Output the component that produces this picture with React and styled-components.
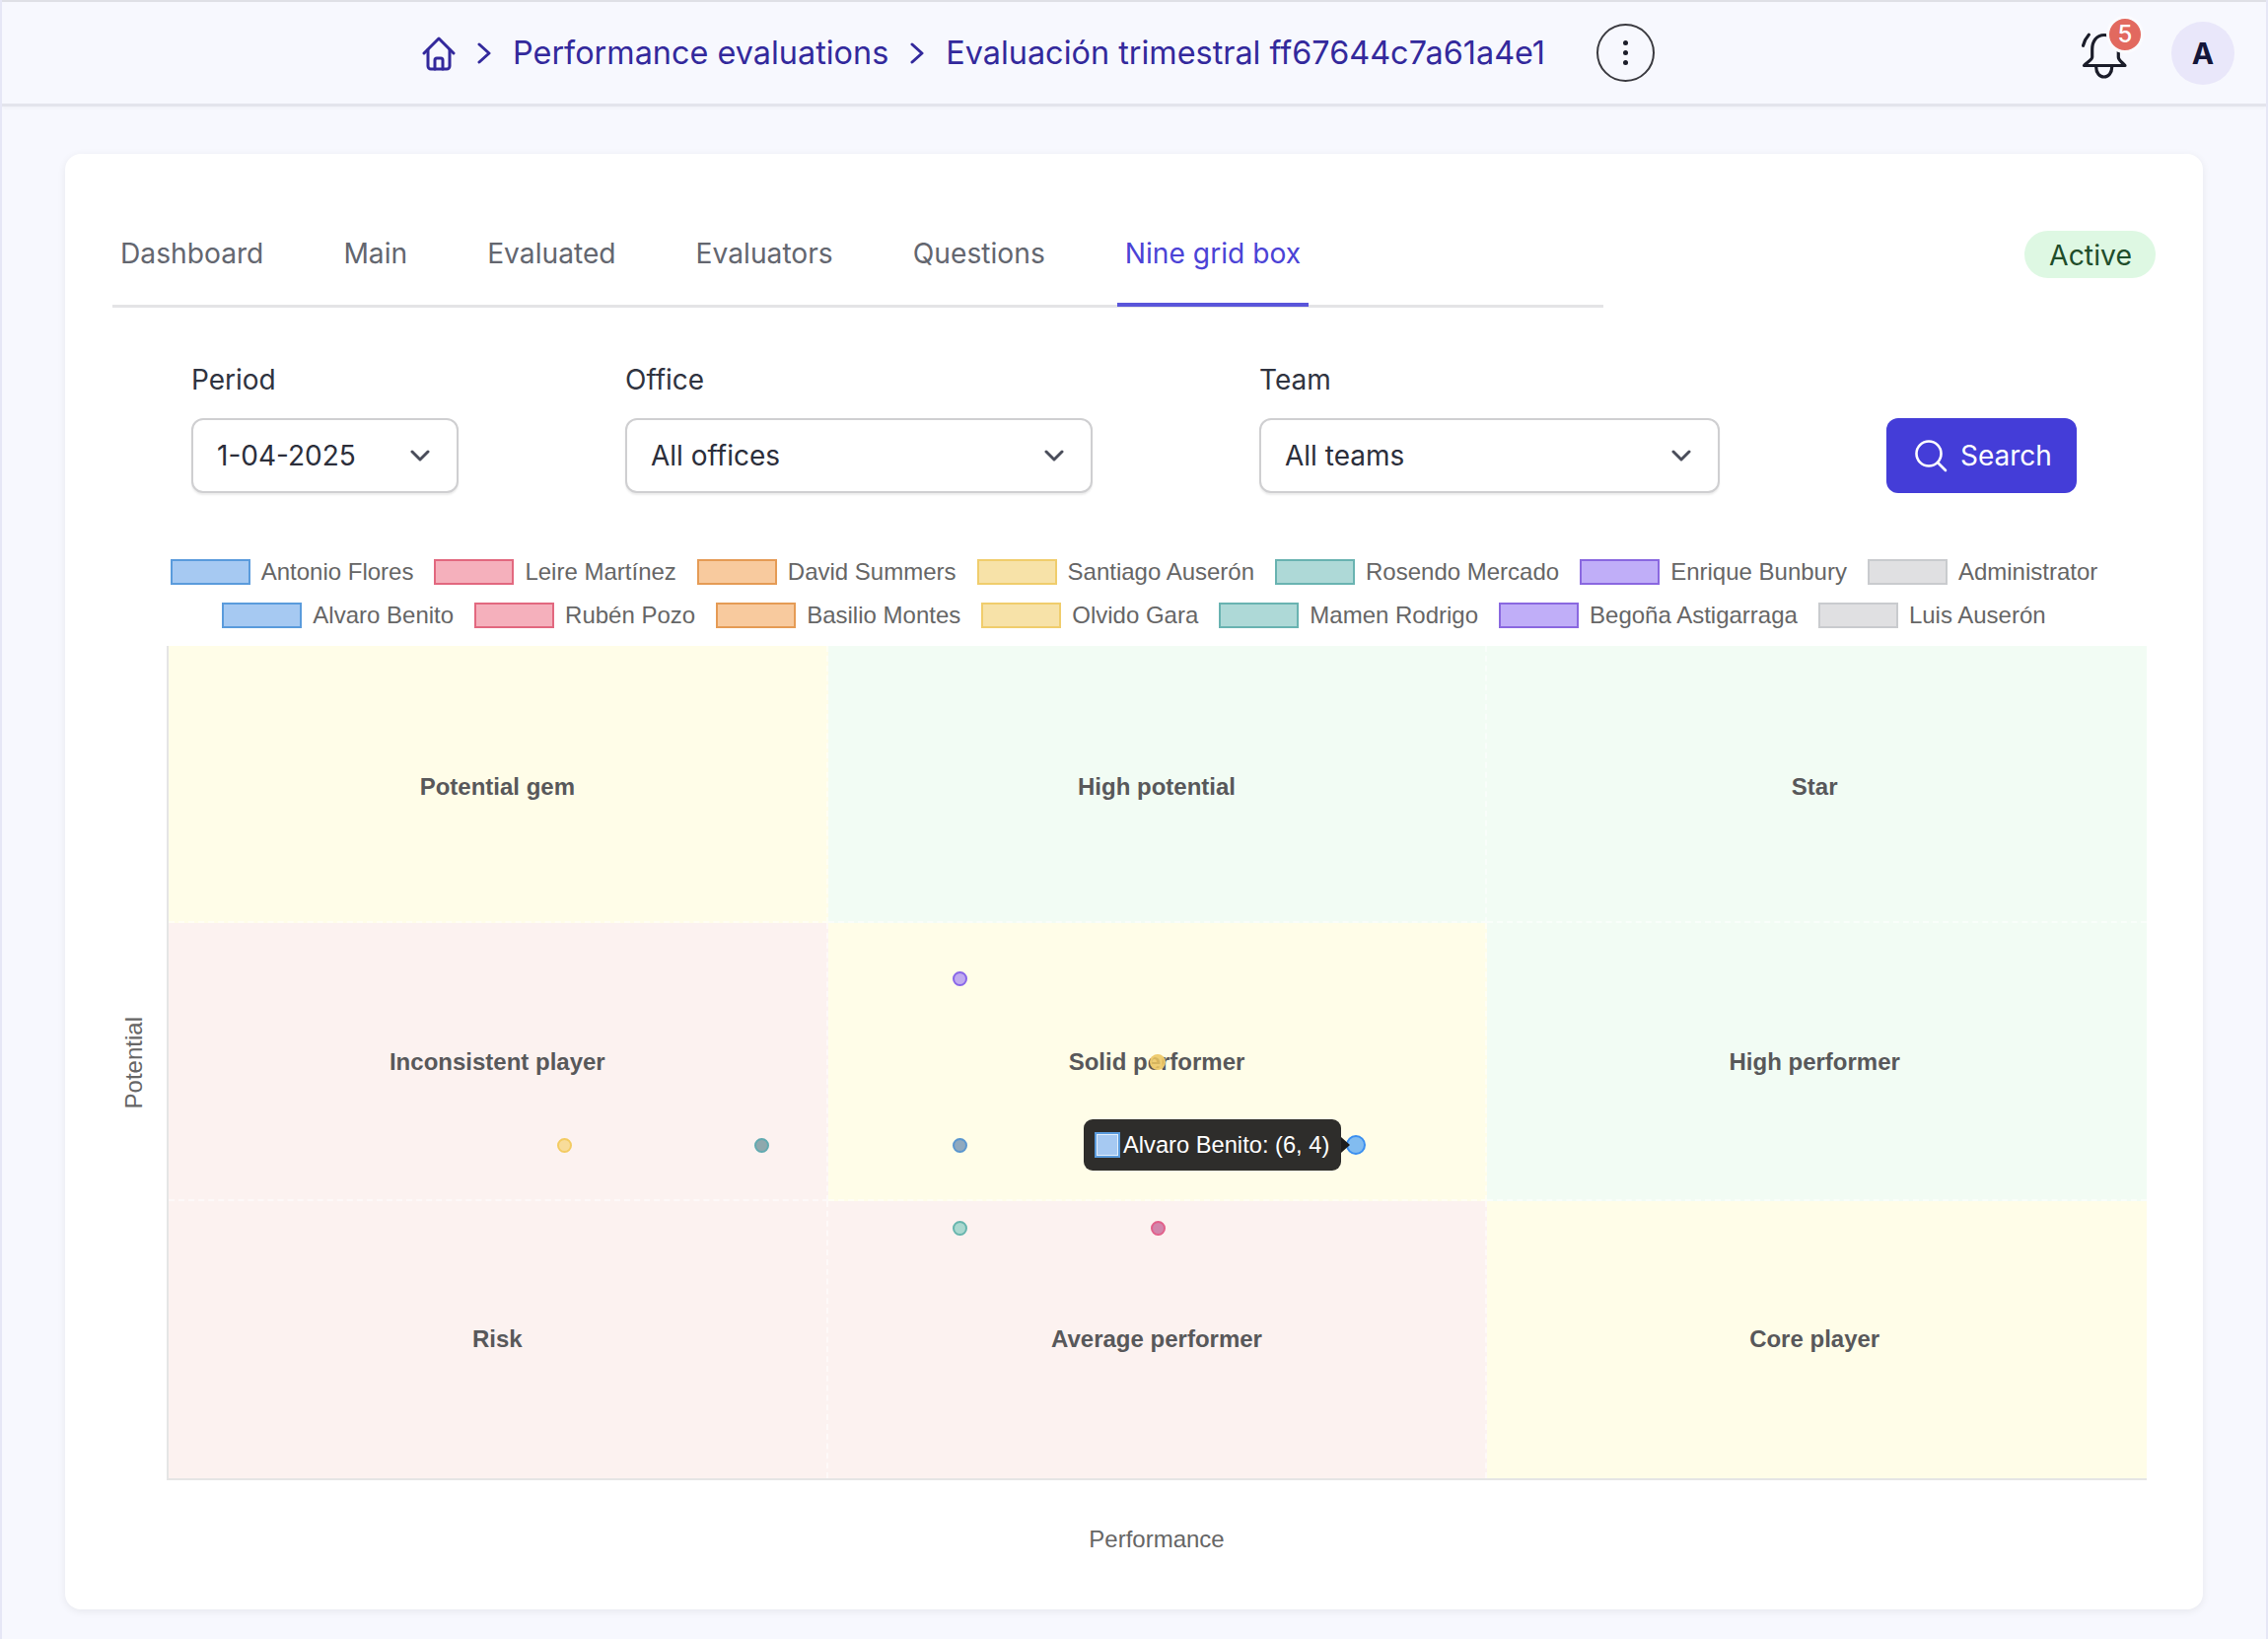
import styled, { createGlobalStyle } from "styled-components"

const GlobalStyle = createGlobalStyle`
    html, body {
        margin: 0;
        padding: 0;
        background-color: #f7f8fe;
    }
    * {
        box-sizing: border-box;
    }
`;

const Page = styled.div`
    width: 2300px;
    height: 1662px;
    border-left: 2px solid #e6e7f6;
    border-right: 2px solid #e6e7f6;
    background-color: #f7f8fe;
    font-family: "Inter", "Liberation Sans", sans-serif;
    overflow: hidden;
`;

const Header = styled.header`
    position: relative;
    display: flex;
    align-items: center;
    height: 108px;
    padding: 0 32px 0 426px;
    border-top: 2px solid #dfe0e6;
    border-bottom: 3px solid #e3e4ec;
    box-shadow: 0px 2px 4px 0px rgba(0,0,0,0.03);
`;

const Crumbs = styled.nav`
    display: flex;
    align-items: center;
    color: #33299c;
    font-size: 32.4px;
    line-height: 40px;
`;

const CrumbIcon = styled.svg`
    display: block;
    flex: none;
    fill: none;
    stroke: #33299c;
    stroke-width: 3;
    stroke-linecap: round;
    stroke-linejoin: round;
`;

const CrumbSeparator = styled(CrumbIcon)`
    margin: 0 22px 0 ${({ $first }) => $first ? "22px" : "22px"};
`;

const MenuButton = styled.button`
    display: flex;
    flex-direction: column;
    justify-content: center;
    align-items: center;
    gap: 5px;
    width: 59px;
    height: 59px;
    margin-left: 52px;
    padding: 0;
    border: 2px solid #3a3a40;
    border-radius: 50%;
    background: none;
`;

const MenuDot = styled.span`
    width: 5px;
    height: 5px;
    border-radius: 50%;
    background-color: #1b1d2a;
`;

const HeaderRight = styled.div`
    display: flex;
    align-items: center;
    margin-left: auto;
`;

const BellWrapper = styled.div`
    position: relative;
    width: 46px;
    height: 48px;
    margin-top: 4px;
    margin-right: 45px;
`;

const BellIcon = styled.svg`
    display: block;
    fill: none;
    stroke: #1b1d2a;
    stroke-width: 3.2;
    stroke-linecap: round;
    stroke-linejoin: round;
`;

const Badge = styled.span`
    position: absolute;
    top: -16px;
    left: 25px;
    display: flex;
    justify-content: center;
    align-items: center;
    width: 38px;
    height: 38px;
    border: 3px solid #fbfbff;
    border-radius: 50%;
    background-color: #e2695f;
    color: #ffffff;
    font-size: 24px;
    font-weight: 500;
`;

const Avatar = styled.div`
    display: flex;
    justify-content: center;
    align-items: center;
    width: 64px;
    height: 64px;
    border-radius: 50%;
    background-color: #e9e7fa;
    color: #14163a;
    font-size: 30px;
    font-weight: 700;
`;

const Card = styled.main`
    width: 2168px;
    margin: 48px 0 0 64px;
    padding: 78px 48px 57px;
    border-radius: 16px;
    background-color: #ffffff;
    box-shadow: 0px 2px 8px 0px rgba(0,0,0,0.07);
`;

const TabRow = styled.div`
    display: flex;
    justify-content: space-between;
    align-items: flex-start;
`;

const TabList = styled.div`
    display: flex;
    gap: 65px;
    width: 1512px;
    padding-top: 6px;
    border-bottom: 3px solid #e4e4e6;
`;

const Tab = styled.div`
    height: 71px;
    margin-bottom: -2px;
    padding: 0 8px;
    border-bottom: 4px solid ${({ $active }) => $active ? "#5a55da" : "transparent"};
    color: ${({ $active }) => $active ? "#4b43d6" : "#63666f"};
    font-size: 28.2px;
    line-height: 34px;
`;

const StatusPill = styled.div`
    display: flex;
    align-items: center;
    height: 48px;
    padding: 0 24px 0 25px;
    border-radius: 24px;
    background-color: #def8e3;
    color: #1f4d2a;
    font-size: 28.4px;
`;

const FilterRow = styled.form`
    display: flex;
    align-items: flex-end;
    gap: 169px;
    margin: 56px 0 0 80px;
`;

const Field = styled.label`
    display: flex;
    flex-direction: column;
    gap: 22px;
    width: ${({ $width }) => $width}px;
    color: #2f3340;
    font-size: 28px;
    line-height: 34px;
`;

const SelectBox = styled.div`
    display: flex;
    justify-content: space-between;
    align-items: center;
    height: 76px;
    padding: 0 27px 0 24px;
    border: 2px solid #cfcfd1;
    border-radius: 12px;
    background-color: #ffffff;
    box-shadow: 0px 2px 2px 0px rgba(0,0,0,0.08);
    color: #2b2e3a;
`;

const Chevron = styled.svg`
    display: block;
    flex: none;
    fill: none;
    stroke: #4a4d5a;
    stroke-width: 3;
    stroke-linecap: round;
    stroke-linejoin: round;
`;

const SearchButton = styled.button`
    display: flex;
    align-items: center;
    gap: 13px;
    width: 193px;
    height: 76px;
    padding: 0 0 0 29px;
    border: none;
    border-radius: 12px;
    background-color: #443dd8;
    color: #ffffff;
    font-family: inherit;
    font-size: 28px;
`;

const SearchIcon = styled.svg`
    display: block;
    flex: none;
    fill: none;
    stroke: #ffffff;
    stroke-width: 2.6;
    stroke-linecap: round;
`;

const Legend = styled.div`
    display: flex;
    flex-direction: column;
    gap: 8px;
    margin-top: 62px;
    color: #666666;
    font-family: "Liberation Sans", Arial, sans-serif;
    font-size: 24px;
`;

const LegendRow = styled.div`
    display: flex;
    justify-content: center;
    gap: 21px;
`;

const LegendItem = styled.div`
    display: flex;
    align-items: center;
    gap: 11px;
    height: 36px;
`;

const Swatch = styled.span`
    width: 81px;
    height: 26px;
    border: 2px solid ${({ $stroke }) => $stroke};
    background-color: ${({ $fill }) => $fill};
`;

const ChartArea = styled.section`
    display: grid;
    grid-template-columns: 55px 2008px;
    margin-top: 13px;
    font-family: "Liberation Sans", Arial, sans-serif;
`;

const YLabel = styled.div`
    display: flex;
    justify-content: center;
    align-items: center;
    padding-right: 11px;
    color: #666666;
    font-size: 24px;

    span {
        writing-mode: vertical-rl;
        transform: rotate(180deg);
    }
`;

const Plot = styled.div`
    position: relative;
    display: grid;
    grid-template-columns: repeat(3, 1fr);
    grid-template-rows: repeat(3, 1fr);
    height: 846px;
    border-left: 2px solid #e5e5e5;
    border-bottom: 2px solid #e5e5e5;
`;

const Cell = styled.div`
    display: flex;
    justify-content: center;
    align-items: center;
    padding: ${({ $row }) => [6, 3, 0][$row]}px ${({ $col }) => $col === 2 ? 5 : 0}px 0 0;
    border-right: ${({ $col }) => $col < 2 ? "2px dashed rgba(255,255,255,0.55)" : "none"};
    border-bottom: ${({ $row }) => $row < 2 ? "2px dashed rgba(255,255,255,0.55)" : "none"};
    background-color: ${({ $tone }) => ({ yellow: "#fffde8", green: "#f2fcf4", red: "#fcf2f0" })[$tone]};
    color: #58585a;
    font-size: 24px;
    font-weight: 700;
`;

const Point = styled.span`
    position: absolute;
    width: ${({ $size }) => $size}px;
    height: ${({ $size }) => $size}px;
    margin: ${({ $size }) => `0 0 ${-$size / 2}px ${-$size / 2}px`};
    border: 2px solid ${({ $stroke }) => $stroke};
    border-radius: 50%;
    background-color: ${({ $fill }) => $fill};
`;

const Tooltip = styled.div`
    position: absolute;
    top: 480px;
    left: 928px;
    display: flex;
    align-items: center;
    gap: 3px;
    width: 261px;
    height: 52px;
    padding: 0 11px;
    border-radius: 9px;
    background-color: #2e2d2b;
    color: #ffffff;
    font-size: 23.7px;
    font-weight: 400;
    white-space: nowrap;

    &::after {
        content: "";
        position: absolute;
        top: 18px;
        right: -9px;
        border-top: 8px solid transparent;
        border-bottom: 8px solid transparent;
        border-left: 9px solid #1d1c1b;
    }
`;

const TooltipSwatch = styled.span`
    flex: none;
    width: 26px;
    height: 26px;
    border: 2px solid #5a9bdc;
    outline: 1px solid rgba(255,255,255,0.7);
    outline-offset: -3px;
    background-color: #a6c9f2;
`;

const XLabel = styled.div`
    margin: 46px 0 0 55px;
    width: 2008px;
    color: #666666;
    font-family: "Liberation Sans", Arial, sans-serif;
    font-size: 24px;
    line-height: 28px;
    text-align: center;
`;

const tabs = ["Dashboard", "Main", "Evaluated", "Evaluators", "Questions", "Nine grid box"];

const colors = {
    blue: { fill: "#a6c9f2", stroke: "#5a9bdc" },
    pink: { fill: "#f5b0bc", stroke: "#e2687f" },
    orange: { fill: "#f8ca9e", stroke: "#e59b55" },
    yellow: { fill: "#f7e2a8", stroke: "#f0cd6c" },
    teal: { fill: "#aed9d7", stroke: "#69b3b1" },
    purple: { fill: "#c0aef8", stroke: "#8a68e0" },
    gray: { fill: "#e0e0e2", stroke: "#c9cbce" },
};

const legendRows = [
    [
        ["Antonio Flores", "blue"], ["Leire Martínez", "pink"], ["David Summers", "orange"],
        ["Santiago Auserón", "yellow"], ["Rosendo Mercado", "teal"], ["Enrique Bunbury", "purple"],
        ["Administrator", "gray"],
    ],
    [
        ["Alvaro Benito", "blue"], ["Rubén Pozo", "pink"], ["Basilio Montes", "orange"],
        ["Olvido Gara", "yellow"], ["Mamen Rodrigo", "teal"], ["Begoña Astigarraga", "purple"],
        ["Luis Auserón", "gray"],
    ],
];

const cells = [
    ["Potential gem", "yellow"], ["High potential", "green"], ["Star", "green"],
    ["Inconsistent player", "red"], ["Solid performer", "yellow"], ["High performer", "green"],
    ["Risk", "red"], ["Average performer", "red"], ["Core player", "yellow"],
];

const points = [
    { x: 4, y: 6, size: 15, fill: "#c0aaf0", stroke: "#8866e8" },
    { x: 5, y: 5, size: 16, fill: "rgba(236,198,96,0.85)", stroke: "rgba(240,205,110,0.85)" },
    { x: 2, y: 4, size: 15, fill: "#f8dc9a", stroke: "#f3cb62" },
    { x: 3, y: 4, size: 15, fill: "#8fa8ad", stroke: "#62aab0" },
    { x: 4, y: 4, size: 15, fill: "#8fa9bf", stroke: "#5a96cf" },
    { x: 6, y: 4, size: 20, fill: "#82bcf0", stroke: "#3b8ff0" },
    { x: 4, y: 3, size: 15, fill: "#a9d8cf", stroke: "#66b5ad" },
    { x: 5, y: 3, size: 15, fill: "#d285ab", stroke: "#e2608a" },
];

const ChevronDown = () => (
    <Chevron width="20" height="12" viewBox="0 0 20 12">
        <path d="M2 2l8 8 8-8" />
    </Chevron>
);

const Select = ({ label, value, width }) => (
    <Field $width={width}>
        {label}
        <SelectBox>
            {value}
            <ChevronDown />
        </SelectBox>
    </Field>
);

const App = () => {
    return (
        <Page>
            <GlobalStyle />
            <Header>
                <Crumbs>
                    <CrumbIcon width="34" height="36" viewBox="0 0 34 36">
                        <path d="M2 18L17 3l15 15" />
                        <path d="M6 14.5V31a3 3 0 0 0 3 3h16a3 3 0 0 0 3-3V14.5" />
                        <path d="M13 34V25a2 2 0 0 1 2-2h4a2 2 0 0 1 2 2v9" />
                    </CrumbIcon>
                    <CrumbSeparator $first width="14" height="22" viewBox="0 0 14 22">
                        <path d="M2 2l10 9-10 9" />
                    </CrumbSeparator>
                    Performance evaluations
                    <CrumbSeparator width="14" height="22" viewBox="0 0 14 22">
                        <path d="M2 2l10 9-10 9" />
                    </CrumbSeparator>
                    Evaluación trimestral ff67644c7a61a4e1
                </Crumbs>
                <MenuButton>
                    <MenuDot />
                    <MenuDot />
                    <MenuDot />
                </MenuButton>
                <HeaderRight>
                    <BellWrapper>
                        <BellIcon width="46" height="48" viewBox="0 0 46 48">
                            <path d="M23 3.5C15 3.5 10.7 10 10.7 18v8c0 3-5.5 5-8.2 8.5H44C41 31 37.3 29 37.3 26v-8C37.3 10 31 3.5 23 3.5z" />
                            <path d="M14.7 36c0 6 3.5 10 8 10s8-4 8-10" />
                            <path d="M7.3 3.3C4.500 6.500 2.500 10 1.500 14.300" />
                        </BellIcon>
                        <Badge>5</Badge>
                    </BellWrapper>
                    <Avatar>A</Avatar>
                </HeaderRight>
            </Header>
            <Card>
                <TabRow>
                    <TabList>
                        {tabs.map((tab) => (
                            <Tab key={tab} $active={tab === "Nine grid box"}>{tab}</Tab>
                        ))}
                    </TabList>
                    <StatusPill>Active</StatusPill>
                </TabRow>
                <FilterRow>
                    <Select label="Period" value="1-04-2025" width={271} />
                    <Select label="Office" value="All offices" width={474} />
                    <Select label="Team" value="All teams" width={467} />
                    <SearchButton type="button">
                        <SearchIcon width="33" height="33" viewBox="0 0 33 33">
                            <circle cx="14" cy="14" r="12.500" />
                            <path d="M23.500 23.500L31 31" />
                        </SearchIcon>
                        Search
                    </SearchButton>
                </FilterRow>
                <Legend>
                    {legendRows.map((row, i) => (
                        <LegendRow key={i}>
                            {row.map(([name, color]) => (
                                <LegendItem key={name}>
                                    <Swatch $fill={colors[color].fill} $stroke={colors[color].stroke} />
                                    {name}
                                </LegendItem>
                            ))}
                        </LegendRow>
                    ))}
                </Legend>
                <ChartArea>
                    <YLabel><span>Potential</span></YLabel>
                    <Plot>
                        {cells.map(([name, tone], i) => (
                            <Cell key={name} $tone={tone} $row={Math.floor(i / 3)} $col={i % 3}>{name}</Cell>
                        ))}
                        {points.map((p) => (
                            <Point
                                key={`${p.x}-${p.y}`}
                                $size={p.size}
                                $fill={p.fill}
                                $stroke={p.stroke}
                                style={{ left: `${p.x * 10}%`, bottom: `${p.y * 10}%` }}
                            />
                        ))}
                        <Tooltip>
                            <TooltipSwatch />
                            Alvaro Benito: (6, 4)
                        </Tooltip>
                    </Plot>
                </ChartArea>
                <XLabel>Performance</XLabel>
            </Card>
        </Page>
    );
}

export default App;
